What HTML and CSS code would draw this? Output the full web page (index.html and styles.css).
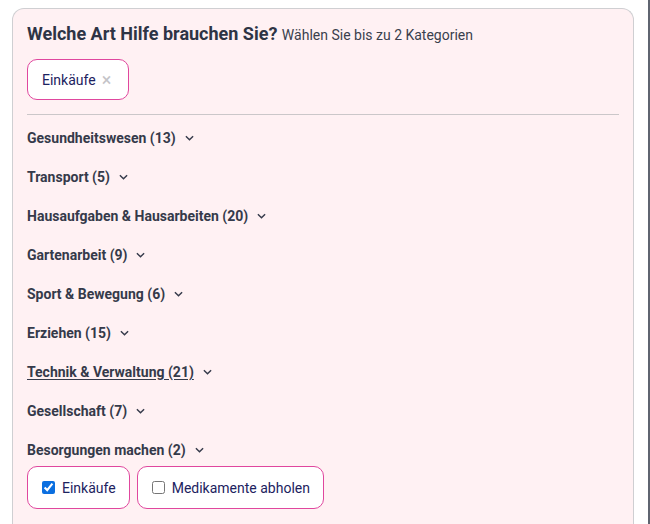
FILE: index.html
```html
<!DOCTYPE html>
<html lang="de">
<head>
<meta charset="utf-8">
<link rel="stylesheet" href="styles.css">
</head>
<body>
<div class="page">
  <section class="card">
    <h2 class="title">Welche Art Hilfe brauchen Sie? <span class="hint">Wählen Sie bis zu 2 Kategorien</span></h2>
    <div class="selected">
      <span class="chip">Einkäufe <span class="x">×</span></span>
    </div>
    <hr class="divider">
    <ul class="cats">
      <li class="cat">Gesundheitswesen (13) <svg class="chev" viewBox="0 0 10 6"><path d="M1 1l4 4 4-4"/></svg></li>
      <li class="cat">Transport (5) <svg class="chev" viewBox="0 0 10 6"><path d="M1 1l4 4 4-4"/></svg></li>
      <li class="cat">Hausaufgaben &amp; Hausarbeiten (20) <svg class="chev" viewBox="0 0 10 6"><path d="M1 1l4 4 4-4"/></svg></li>
      <li class="cat">Gartenarbeit (9) <svg class="chev" viewBox="0 0 10 6"><path d="M1 1l4 4 4-4"/></svg></li>
      <li class="cat">Sport &amp; Bewegung (6) <svg class="chev" viewBox="0 0 10 6"><path d="M1 1l4 4 4-4"/></svg></li>
      <li class="cat">Erziehen (15) <svg class="chev" viewBox="0 0 10 6"><path d="M1 1l4 4 4-4"/></svg></li>
      <li class="cat"><span class="hover">Technik &amp; Verwaltung (21)</span> <svg class="chev" viewBox="0 0 10 6"><path d="M1 1l4 4 4-4"/></svg></li>
      <li class="cat">Gesellschaft (7) <svg class="chev" viewBox="0 0 10 6"><path d="M1 1l4 4 4-4"/></svg></li>
      <li class="cat">Besorgungen machen (2) <svg class="chev" viewBox="0 0 10 6"><path d="M1 1l4 4 4-4"/></svg></li>
    </ul>
    <div class="options">
      <label class="opt"><input type="checkbox" checked> Einkäufe</label>
      <label class="opt"><input type="checkbox"> Medikamente abholen</label>
    </div>
  </section>
  <div class="edge"></div>
</div>
</body>
</html>
```
FILE: styles.css
```css
html, body {
  margin: 0;
  padding: 0;
  background: #fff;
  font-family: Roboto, "Liberation Sans", sans-serif;
  overflow: hidden;
}
.page {
  display: flex;
  height: 524px;
  padding: 8px 0 0 12px;
  box-sizing: border-box;
}
.card {
  width: 622px;
  box-sizing: border-box;
  background: #fff1f3;
  border: 1px solid #cfcfd2;
  border-bottom: none;
  border-radius: 12px 12px 0 0;
  padding: 12px 14px 0 14px;
}
.edge {
  margin-left: auto;
  margin-top: -8px;
  width: 2px;
  background: #5f6470;
}
.title {
  margin: 0;
  font-size: 18px;
  font-weight: 700;
  color: #2e3445;
  line-height: 26px;
}
.hint {
  font-size: 14px;
  font-weight: 400;
  color: #3a3f4d;
}
.selected {
  margin-top: 11px;
  display: flex;
}
.chip {
  display: inline-flex;
  align-items: center;
  height: 41px;
  box-sizing: border-box;
  padding: 0 17px 0 14px;
  background: #fff;
  border: 1px solid #e0479e;
  border-radius: 10px;
  color: #1c2260;
  font-size: 14px;
}
.x {
  color: #c4c4c8;
  margin-left: 6px;
  font-size: 18px;
  line-height: 1;
}
.divider {
  margin: 14px 0 0 0;
  border: none;
  border-top: 1px solid #cbc7c9;
}
.cats {
  list-style: none;
  margin: 0;
  padding: 0;
  padding-top: 3px;
}
.cat {
  height: 39px;
  display: flex;
  align-items: center;
  font-size: 14px;
  font-weight: 700;
  color: #353a4a;
}
.hover {
  text-decoration: underline;
  text-underline-offset: 2px;
}
.chev {
  width: 9px;
  height: 6px;
  margin-left: 9px;
  fill: none;
  stroke: #353a4a;
  stroke-width: 1.6;
}
.options {
  display: flex;
  gap: 7px;
  margin-top: -3px;
}
.opt {
  display: inline-flex;
  align-items: center;
  height: 43px;
  box-sizing: border-box;
  padding: 0 13px 0 14px;
  background: #fff;
  border: 1px solid #e0479e;
  border-radius: 10px;
  color: #1c2260;
  font-size: 14px;
}
.opt input {
  margin: 0 7px 0 0;
  width: 13px;
  height: 13px;
  accent-color: #0b6fe0;
}
```
